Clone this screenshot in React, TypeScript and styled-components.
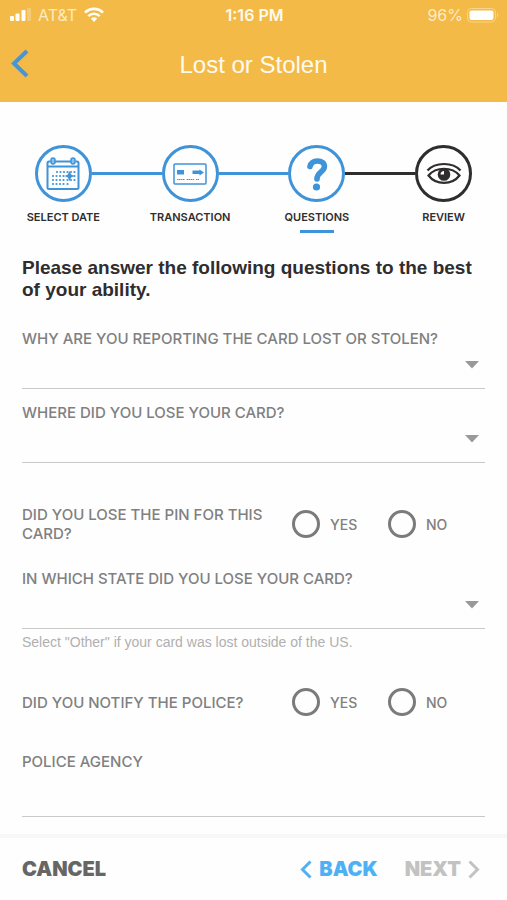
import React from "react";
import styled, { createGlobalStyle } from "styled-components";

const BLUE = "#3f93d8";
const DARK = "#2f2d2e";

const GlobalStyle = createGlobalStyle`
  *, *::before, *::after { box-sizing: border-box; }
  body { margin: 0; background: #fefefe; font-family: "Liberation Sans", Arial, sans-serif; }
  button, input, select { font: inherit; color: inherit; }
`;

const Page = styled.div`
  display: flex;
  flex-direction: column;
  min-height: 100vh;
`;

const Header = styled.header`
  background: #f3ba47;
  color: #fffaf0;
  padding-bottom: 12px;
`;

const StatusBar = styled.div`
  display: grid;
  grid-template-columns: 1fr auto 1fr;
  align-items: center;
  height: 30px;
  padding: 0 8px 0 10px;
  font-family: Inter, sans-serif;
  font-size: 16px;
  line-height: 20px;
`;

const StatusGroup = styled.div<{ $end?: boolean }>`
  display: flex;
  align-items: center;
  justify-content: ${(p) => (p.$end ? "flex-end" : "flex-start")};
  gap: ${(p) => (p.$end ? 4 : 7)}px;
  color: #fdebc4;
`;

const Clock = styled.span`
  font-weight: 600;
`;

const TitleBar = styled.div`
  display: grid;
  grid-template-columns: 40px 1fr 40px;
  align-items: center;
  height: 60px;
  padding-top: 6px;
`;

const IconButton = styled.button`
  display: flex;
  justify-content: center;
  padding: 0;
  border: 0;
  background: none;
  color: #4695d6;
  cursor: pointer;
`;

const Title = styled.h1`
  margin: 0;
  padding-top: 4px;
  font-size: 24px;
  font-weight: 400;
  line-height: 28px;
  text-align: center;
`;

const Steps = styled.ol`
  display: grid;
  grid-template-columns: repeat(4, 1fr);
  margin: 0;
  padding: 43px 0 0;
  list-style: none;
`;

const Step = styled.li`
  display: flex;
  flex-direction: column;
  align-items: center;
`;

const StepTrack = styled.div`
  display: flex;
  align-items: center;
  width: 100%;
`;

const Connector = styled.span<{ $color: string }>`
  flex: 1;
  height: 3px;
  background: ${(p) => p.$color};
`;

const StepCircle = styled.span<{ $color: string }>`
  display: flex;
  align-items: center;
  justify-content: center;
  width: 57px;
  height: 57px;
  border: 3px solid ${(p) => p.$color};
  border-radius: 50%;
  color: ${(p) => p.$color};
`;

const StepLabel = styled.span<{ $current: boolean }>`
  display: flex;
  flex-direction: column;
  align-items: center;
  gap: 5px;
  margin-top: 7px;
  color: ${DARK};
  font-family: Inter, sans-serif;
  font-size: 11px;
  font-weight: 600;
  line-height: 16px;

  &::after {
    content: "";
    width: 34px;
    height: 3px;
    background: ${(p) => (p.$current ? BLUE : "transparent")};
  }
`;

const Form = styled.form`
  display: flex;
  flex: 1;
  flex-direction: column;
`;

const Fields = styled.div`
  display: flex;
  flex: 1;
  flex-direction: column;
  padding: 24px 22px 14px;
  color: #808080;
  font-family: Inter, sans-serif;
  font-size: 15px;
  font-weight: 500;
  line-height: 19px;
`;

const Intro = styled.h2`
  margin: 0 0 28px;
  color: ${DARK};
  font-family: "Liberation Sans", Arial, sans-serif;
  font-size: 19px;
  font-weight: 700;
  line-height: 22px;
`;

const Field = styled.div<{ $gap: number }>`
  display: flex;
  flex-direction: column;
  margin-bottom: ${(p) => p.$gap}px;
`;

const SelectWrap = styled.div`
  display: grid;
  align-items: center;
  border-bottom: 1px solid #c9c9c9;

  > * { grid-area: 1 / 1; }
  > svg { justify-self: end; margin-right: 6px; margin-top: -6px; pointer-events: none; }
`;

const Select = styled.select`
  width: 100%;
  height: 40px;
  border: 0;
  background: transparent;
  appearance: none;
`;

const TextInput = styled.input`
  width: 100%;
  height: 46px;
  border: 0;
  border-bottom: 1px solid #c9c9c9;
  background: transparent;
`;

const Hint = styled.p`
  margin: 5px 0 0;
  color: #b0b0b0;
  font-family: "Liberation Sans", Arial, sans-serif;
  font-size: 14px;
  font-weight: 400;
  line-height: 16px;
`;

const ChoiceRow = styled.fieldset<{ $gap: number }>`
  margin: 0 0 ${(p) => p.$gap}px;
  padding: 0;
  border: 0;
`;

const ChoiceGrid = styled.div`
  display: grid;
  grid-template-columns: minmax(0, 1fr) 96px 97px;
  align-items: center;
`;

const Choice = styled.label`
  display: flex;
  align-items: center;
  gap: 10px;
  font-size: 14px;
  cursor: pointer;
`;

const Radio = styled.input`
  width: 28px;
  height: 28px;
  margin: 0;
  border: 3px solid #7b7b7b;
  border-radius: 50%;
  appearance: none;

  &:checked { background: radial-gradient(#7b7b7b 45%, transparent 50%); }
`;

const Footer = styled.footer`
  display: flex;
  align-items: center;
  gap: 27px;
  height: 66px;
  padding: 4px 27px 4px 22px;
  border-top: 4px solid #f7f7f7;
`;

const FooterButton = styled.button<{ $color: string; $push?: boolean }>`
  display: flex;
  align-items: center;
  gap: 7px;
  margin-right: ${(p) => (p.$push ? "auto" : "0")};
  padding: 0;
  border: 0;
  background: none;
  color: ${(p) => p.$color};
  font-family: Inter, sans-serif;
  font-size: 20px;
  font-weight: 900;
  line-height: 24px;
  cursor: pointer;
`;

const SignalIcon = () => (
  <svg width="21" height="14" viewBox="0 0 21 14" aria-hidden="true">
    <g fill="#fffdf6">
      <rect x="0" y="8" width="4" height="5" rx="1" />
      <rect x="5.5" y="5.5" width="4" height="7.5" rx="1" />
      <rect x="11.5" y="2" width="4" height="11" rx="1" />
    </g>
    <rect x="17" y="0" width="4" height="13" rx="1" fill="#f8d794" opacity=".6" />
  </svg>
);

const WifiIcon = () => (
  <svg width="20" height="16" viewBox="0 0 20 16" aria-hidden="true">
    <g fill="none" stroke="#fffdf6" strokeWidth="2.6">
      <path d="M1 5.6C6.1.6 13.9.6 19 5.6" />
      <path d="M4.3 9.1c3.3-3.1 8.1-3.1 11.4 0" />
    </g>
    <path d="M6.8 11.6c1.9-1.7 4.5-1.7 6.4 0L10 15z" fill="#fffdf6" />
  </svg>
);

const BatteryIcon = () => (
  <svg width="32" height="15" viewBox="0 0 32 15" aria-hidden="true">
    <rect x=".5" y=".5" width="28" height="13.5" rx="4" fill="none" stroke="#f8d58e" />
    <rect x="2.5" y="2.5" width="24" height="9.5" rx="2" fill="#fff" />
    <path d="M30 5c1.7.8 1.7 3.7 0 4.5z" fill="#f8d58e" />
  </svg>
);

const Chevron = ({ w, h, stroke, right }: { w: number; h: number; stroke: number; right?: boolean }) => {
  const near = stroke / 2 + 1;
  const tip = right ? w - near : near;
  const end = right ? stroke / 2 : w - stroke / 2;
  return (
    <svg width={w} height={h} viewBox={`0 0 ${w} ${h}`} aria-hidden="true">
      <path
        d={`M${end} ${stroke / 2}L${tip} ${h / 2}L${end} ${h - stroke / 2}`}
        fill="none"
        stroke="currentColor"
        strokeWidth={stroke}
      />
    </svg>
  );
};

const Caret = () => (
  <svg width="14" height="8" viewBox="0 0 14 8" aria-hidden="true">
    <path d="M0 0h14L7 7.5z" fill="#999" />
  </svg>
);

const CALENDAR_DOTS = [
  [11, 15], [14.5, 15], [18, 15], [21.5, 15], [25, 15], [28.5, 15],
  [7, 19], [10.5, 19], [14, 19], [17.5, 19], [28.5, 19],
  [7, 23], [10.5, 23], [14, 23], [17.5, 23], [21.5, 23], [25, 23], [28.5, 23],
  [7, 27], [10.5, 27], [14, 27], [17.5, 27], [21.5, 27],
];

const CalendarIcon = () => (
  <svg width="34" height="34" viewBox="0 0 34 34" fill="none" stroke="currentColor" aria-hidden="true">
    <path
      d="M4.5 4.5H3A1.5 1.5 0 0 0 1.5 6v24.500A1.500 1.500 0 0 0 3 32h28a1.500 1.500 0 0 0 1.500-1.500V6A1.500 1.500 0 0 0 31 4.500h-1.500M9 4.500h16M2 9.500h30"
      strokeWidth="2"
    />
    <rect x="5" y="1" width="4" height="6" rx="2" fill="currentColor" fillOpacity=".6" strokeWidth="1.500" />
    <rect x="25" y="1" width="4" height="6" rx="2" fill="currentColor" fillOpacity=".6" strokeWidth="1.500" />
    <g fill="currentColor" stroke="none">
      {CALENDAR_DOTS.map(([x, y]) => (
        <circle key={`${x}-${y}`} cx={x} cy={y} r="1.100" />
      ))}
      <path d="M23.500 14l1.600 3.400 3.400 1.600-3.400 1.600-1.600 3.400-1.600-3.400-3.400-1.600 3.400-1.600z" />
    </g>
  </svg>
);

const CardIcon = () => (
  <svg width="34" height="22" viewBox="0 0 34 22" aria-hidden="true">
    <rect x="1" y="1" width="32" height="20" rx="1" fill="none" stroke="currentColor" strokeWidth="1.500" />
    <path d="M4 7h7v4.500H4zM19.500 7.500h7V6.500l4.500 3-4.500 3v-1.500h-7z" fill="currentColor" />
    <path d="M4 16.500h8M13.500 16.500h8M23 16.500h3" stroke="currentColor" strokeDasharray="1.500 .5" />
  </svg>
);

const QuestionIcon = () => (
  <svg width="22" height="34" viewBox="0 0 22 34" aria-hidden="true">
    <path
      d="M4 9.500C5 5.500 8 4 11.500 4c4.200 0 6.900 2 6.900 5.500 0 5.500-7.400 5.500-7.400 12.500"
      fill="none"
      stroke="currentColor"
      strokeWidth="5.600"
      strokeLinecap="round"
      strokeLinejoin="round"
    />
    <circle cx="10.500" cy="30" r="3.600" fill="currentColor" />
  </svg>
);

const EyeIcon = () => (
  <svg width="36" height="24" viewBox="0 0 36 24" fill="none" stroke="currentColor" aria-hidden="true">
    <path d="M1.500 8.500C9-.2 27-.2 34.500 8.500" strokeWidth="2.200" />
    <path d="M2.500 13.500C10 4.500 26 4.500 33.500 13.500 26 23.300 10 23.300 2.500 13.500z" strokeWidth="2.200" />
    <circle cx="18" cy="12.500" r="6.300" fill="currentColor" stroke="none" />
    <path d="M18 9v3.500h-3.500c0-2 1.500-3.500 3.500-3.500z" fill="#fff" stroke="none" />
  </svg>
);

const STEPS = [
  { label: "SELECT DATE", icon: <CalendarIcon />, color: BLUE, before: "transparent", after: BLUE },
  { label: "TRANSACTION", icon: <CardIcon />, color: BLUE, before: BLUE, after: BLUE },
  { label: "QUESTIONS", icon: <QuestionIcon />, color: BLUE, before: BLUE, after: DARK, current: true },
  { label: "REVIEW", icon: <EyeIcon />, color: DARK, before: DARK, after: "transparent" },
];

type SelectFieldProps = { id: string; label: string; hint?: string; gap: number };

const SelectField = ({ id, label, hint, gap }: SelectFieldProps) => (
  <Field $gap={gap}>
    <label htmlFor={id}>{label}</label>
    <SelectWrap>
      <Select id={id} defaultValue="" aria-describedby={hint ? `${id}-hint` : undefined}>
        <option value="" />
      </Select>
      <Caret />
    </SelectWrap>
    {hint && <Hint id={`${id}-hint`}>{hint}</Hint>}
  </Field>
);

const YesNo = ({ name, label, gap }: { name: string; label: string; gap: number }) => (
  <ChoiceRow $gap={gap} aria-labelledby={`${name}-label`}>
    <ChoiceGrid>
      <span id={`${name}-label`}>{label}</span>
      <Choice>
        <Radio type="radio" name={name} value="yes" />
        YES
      </Choice>
      <Choice>
        <Radio type="radio" name={name} value="no" />
        NO
      </Choice>
    </ChoiceGrid>
  </ChoiceRow>
);

export default function App() {
  return (
    <Page>
      <GlobalStyle />
      <Header>
        <StatusBar>
          <StatusGroup>
            <SignalIcon />
            <span>AT&amp;T</span>
            <WifiIcon />
          </StatusGroup>
          <Clock>1:16 PM</Clock>
          <StatusGroup $end>
            <span>96%</span>
            <BatteryIcon />
          </StatusGroup>
        </StatusBar>
        <TitleBar>
          <IconButton type="button" aria-label="Go back">
            <Chevron w={18} h={29} stroke={4} />
          </IconButton>
          <Title>Lost or Stolen</Title>
        </TitleBar>
      </Header>
      <Steps>
        {STEPS.map((s) => (
          <Step key={s.label} aria-current={s.current ? "step" : undefined}>
            <StepTrack>
              <Connector $color={s.before} />
              <StepCircle $color={s.color}>{s.icon}</StepCircle>
              <Connector $color={s.after} />
            </StepTrack>
            <StepLabel $current={Boolean(s.current)}>{s.label}</StepLabel>
          </Step>
        ))}
      </Steps>
      <Form onSubmit={(e) => e.preventDefault()}>
        <Fields>
          <Intro>Please answer the following questions to the best of your ability.</Intro>
          <SelectField id="reason" label="WHY ARE YOU REPORTING THE CARD LOST OR STOLEN?" gap={14} />
          <SelectField id="place" label="WHERE DID YOU LOSE YOUR CARD?" gap={42} />
          <YesNo name="pin" label="DID YOU LOSE THE PIN FOR THIS CARD?" gap={26} />
          <SelectField
            id="state"
            label="IN WHICH STATE DID YOU LOSE YOUR CARD?"
            hint={'Select "Other" if your card was lost outside of the US.'}
            gap={38}
          />
          <YesNo name="police" label="DID YOU NOTIFY THE POLICE?" gap={36} />
          <Field $gap={0}>
            <label htmlFor="agency">POLICE AGENCY</label>
            <TextInput id="agency" type="text" />
          </Field>
        </Fields>
        <Footer>
          <FooterButton type="button" $color="#666" $push>
            CANCEL
          </FooterButton>
          <FooterButton type="button" $color="#4fb1f5">
            <Chevron w={12} h={19} stroke={3} />
            BACK
          </FooterButton>
          <FooterButton type="submit" $color="#c2c2c2">
            NEXT
            <Chevron w={12} h={19} stroke={3} right />
          </FooterButton>
        </Footer>
      </Form>
    </Page>
  );
}
